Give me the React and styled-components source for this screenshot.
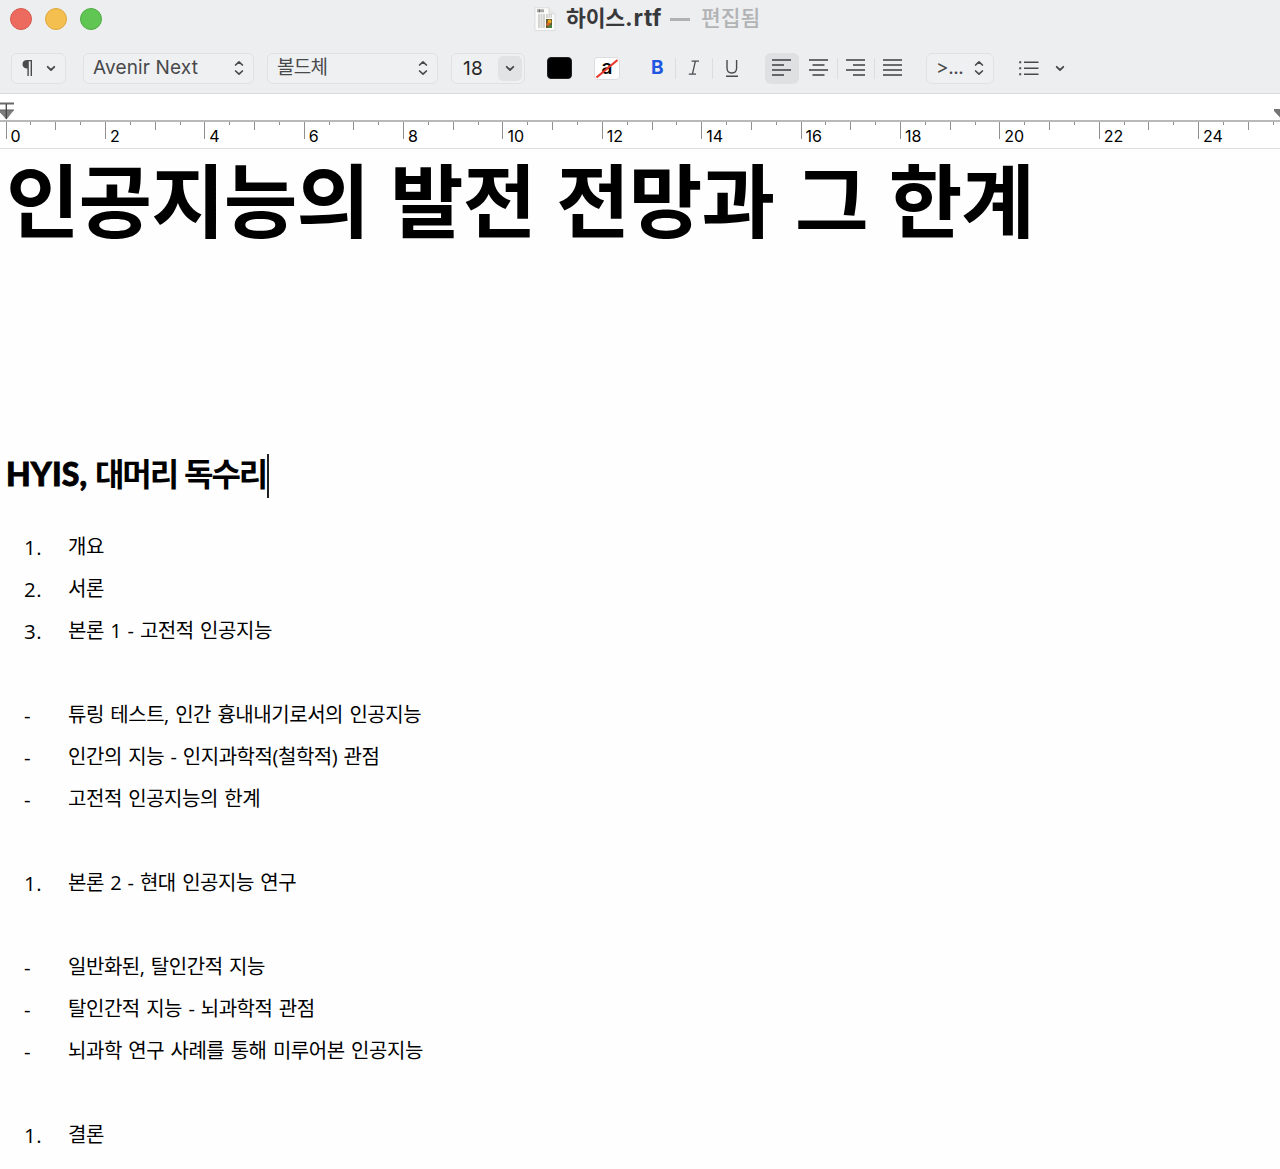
import React from "react";
import styled, { createGlobalStyle } from "styled-components";

const esquema = [
  { marca: "1.", texto: "개요" },
  { marca: "2.", texto: "서론" },
  { marca: "3.", texto: "본론 1 - 고전적 인공지능" },
  {},
  { marca: "-", texto: "튜링 테스트, 인간 흉내내기로서의 인공지능" },
  { marca: "-", texto: "인간의 지능 - 인지과학적(철학적) 관점" },
  { marca: "-", texto: "고전적 인공지능의 한계" },
  {},
  { marca: "1.", texto: "본론 2 - 현대 인공지능 연구" },
  {},
  { marca: "-", texto: "일반화된, 탈인간적 지능" },
  { marca: "-", texto: "탈인간적 지능 - 뇌과학적 관점" },
  { marca: "-", texto: "뇌과학 연구 사례를 통해 미루어본 인공지능" },
  {},
  { marca: "1.", texto: "결론" },
];

// una marca cada media unidad de la regla
const marcas = Array.from({ length: 52 }, (_, i) => i);

const Flechas = () => (
  <svg width="10" height="16" viewBox="0 0 10 16" fill="none" stroke="#48494b" strokeWidth="1.7" strokeLinecap="round" strokeLinejoin="round">
    <path d="M1.6 5 5 1.8 8.4 5M1.6 11 5 14.2 8.4 11" />
  </svg>
);

const Abajo = () => (
  <svg width="10" height="7" viewBox="0 0 10 7" fill="none" stroke="#48494b" strokeWidth="1.8" strokeLinecap="round" strokeLinejoin="round">
    <path d="M1.7 1.8 5 5 8.3 1.8" />
  </svg>
);

const lineas = {
  izquierda: ["0 19", "0 12", "0 19", "0 12"],
  centro: ["0 19", "3.5 15.5", "0 19", "3.5 15.5"],
  derecha: ["0 19", "7 19", "0 19", "7 19"],
  justificado: ["0 19", "0 19", "0 19", "0 19"],
};

const Alineado = ({ tipo }) => (
  <svg width="20" height="18" viewBox="0 0 20 18" stroke="#3d3e40" strokeWidth="1.5">
    {lineas[tipo].map((linea, i) => {
      const [x1, x2] = linea.split(" ");
      return <line key={i} x1={x1} x2={x2} y1={1 + i * 5} y2={1 + i * 5} />;
    })}
  </svg>
);

const Documento = () => (
  <svg width="22" height="25" viewBox="0 0 22 25">
    <path d="M1 .8h14l6 6v16.8H1z" fill="#fbfbfa" stroke="#d2d2d2" strokeWidth=".7" />
    <path d="M15 .8v6h6" fill="#e9e9e9" stroke="#cfcfcf" strokeWidth=".6" />
    <path d="M4 2.3v3M5.4 2.3v3M7 2.3v3M9 2.3v3" stroke="#454545" strokeWidth=".9" />
    <path d="M4 8h7M4 10h7M4 12h7M4 14h7M4 16h7M4 18h7M4 20h7M12 8h6M12 10h6" stroke="#a4a4a0" strokeWidth=".9" strokeDasharray="2 .5" />
    <path d="M12 12h6v9h-6z" fill="#605c2e" />
    <circle cx="15.6" cy="14.5" r="1.9" fill="#f0a51b" />
    <circle cx="14" cy="17.3" r="1.7" fill="#d5632c" />
    <path d="M15 18h3v3h-4z" fill="#4b823b" />
  </svg>
);

const App = () => {
  return (
    <Ventana>
      <EstiloGlobal />
      <BarraTitulo>
        <Semaforos>
          <Luz color="#ed6a5e" borde="#d9574c" />
          <Luz color="#f5bf4f" borde="#dea63a" />
          <Luz color="#61c554" borde="#4dac41" />
        </Semaforos>
        <Documento />
        <Archivo>하이스<Extension>.rtf</Extension></Archivo>
        <Guion />
        <Estado>편집됨</Estado>
      </BarraTitulo>

      <Herramientas>
        <Control ancho="55px" izq="11px">
          <Parrafo width="11" height="17" viewBox="0 0 11 17">
            <path d="M5.4 0H10v16H8.6V1.2H6.8V16H5.4V8.5C2.2 8.5.5 6.8.5 4.2S2.3 0 5.4 0z" fill="#4a4b4d" />
          </Parrafo>
          <Abajo />
        </Control>
        <Control ancho="171px" izq="17px">
          <Valor espacio=".15px">Avenir Next</Valor>
          <Flechas />
        </Control>
        <Control ancho="171px" izq="13px">
          <Valor espacio="-.7px">볼드체</Valor>
          <Flechas />
        </Control>
        <Control ancho="74px" izq="13px" cuerpo>
          <Valor espacio=".3px" cuerpo>18</Valor>
          <BotonCuerpo>
            <Abajo />
          </BotonCuerpo>
        </Control>
        <ColorTexto />
        <ColorFondo>
          a
          <svg width="26" height="23" viewBox="0 0 26 23">
            <path d="M2.5 20.5 23.5 3" stroke="#e8392d" strokeWidth="2.2" />
          </svg>
        </ColorFondo>
        <Estilos>
          <Negrita>B</Negrita>
          <Separador />
          <svg width="12" height="16" viewBox="0 0 12 16" fill="none" stroke="#4a4b4d" strokeWidth="1.3">
            <path d="M3.6 1.2H11M.8 14.2H8M7.4 1.2 4.4 14.2" />
          </svg>
          <Separador />
          <svg width="14" height="19" viewBox="0 0 14 19" fill="none" stroke="#4a4b4d" strokeWidth="1.4">
            <path d="M2 1v8c0 3 1.8 5 4.8 5s4.8-2 4.8-5V1M1 17.3h12" />
          </svg>
        </Estilos>
        <Alineaciones>
          <BotonAlinear activo>
            <Alineado tipo="izquierda" />
          </BotonAlinear>
          <BotonAlinear>
            <Alineado tipo="centro" />
          </BotonAlinear>
          <BotonAlinear linea>
            <Alineado tipo="derecha" />
          </BotonAlinear>
          <BotonAlinear linea>
            <Alineado tipo="justificado" />
          </BotonAlinear>
        </Alineaciones>
        <Control ancho="68px" izq="16px">
          <Valor espacio="-.4px">&gt;...</Valor>
          <Flechas />
        </Control>
        <Listas>
          <svg width="20" height="16" viewBox="0 0 20 16" stroke="#48494b" strokeWidth="1.4">
            <path d="M5 2.2h14.5M5 8.2h14.5M5 14.2h14.5" />
            <path d="M.2 2.2h2M.2 8.2h2M.2 14.2h2" strokeWidth="2" />
          </svg>
          <Abajo />
        </Listas>
      </Herramientas>

      <Regla>
        <Margenes>
          <svg width="14" height="19" viewBox="0 0 14 19">
            <path d="M0 .5h14v2H0z" fill="#686868" />
            <path d="M0 8h14L6.5 17.5 0 10.5z" fill="#7c7c7c" />
            <path d="M0 8h14" stroke="#5f5f5f" />
            <path d="M6.3 2v15" stroke="#444" strokeWidth="1.3" />
          </svg>
          <svg width="6" height="19" viewBox="0 0 6 19">
            <path d="M0 7h6v8.5L0 9z" fill="#747474" />
          </svg>
        </Margenes>
        <Escala>
          {marcas.map((i) => (
            <Marca key={i} alto={i % 4 === 0 ? 17 : i % 2 === 0 ? 8 : 3}>
              {i % 4 === 0 && <Numero>{i / 2}</Numero>}
            </Marca>
          ))}
        </Escala>
      </Regla>

      <Hoja>
        <Titular>인공지능의 발전 전망과 그 한계</Titular>
        <Autores>
          <Siglas>HYIS,</Siglas>
          <span>대머리 독수리</span>
          <Cursor />
        </Autores>
        <Esquema>
          {esquema.map((punto, i) => (
            <Punto key={i}>
              <Vineta>{punto.marca}</Vineta>
              <span>{punto.texto}</span>
            </Punto>
          ))}
        </Esquema>
      </Hoja>
    </Ventana>
  );
};

const EstiloGlobal = createGlobalStyle`
  * {
    box-sizing: border-box;
  }

  body {
    margin: 0;
    background: #fefefe;
  }

  svg {
    display: block;
    flex: none;
  }
`;

const Ventana = styled.div`
  width: 1280px;
  height: 1169px;
  overflow: hidden;
  background: #fefefe;
  color: #000;
  font-family: Inter, "Noto Sans CJK KR", sans-serif;
`;

const BarraTitulo = styled.header`
  display: flex;
  align-items: center;
  height: 38px;
  background: #edeef0;
`;

const Semaforos = styled.div`
  display: flex;
  gap: 13px;
  width: 534px;
  padding-left: 10px;
`;

const Luz = styled.span`
  width: 22px;
  height: 22px;
  border-radius: 50%;
  background: ${(props) => props.color};
  border: 1px solid ${(props) => props.borde};
`;

const Archivo = styled.strong`
  width: 96px;
  margin-left: 10px;
  margin-top: -3px;
  font-size: 21.5px;
  line-height: 36px;
  letter-spacing: -0.1px;
  white-space: nowrap;
  color: #38393b;
`;

const Extension = styled.span`
  font-size: 23px;
  letter-spacing: 0.7px;
`;

const Guion = styled.span`
  width: 20px;
  height: 3px;
  margin: 1px 11px 0 8px;
  background: #b0b1b3;
`;

const Estado = styled.span`
  margin-top: -3px;
  font-size: 21.5px;
  font-weight: 500;
  line-height: 36px;
  color: #b2b3b5;
`;

const Herramientas = styled.div`
  display: flex;
  align-items: center;
  height: 56px;
  padding-top: 5px;
  background: #edeef0;
  border-bottom: 1px solid #d9dadb;
`;

const Control = styled.div`
  display: flex;
  flex: none;
  align-items: center;
  justify-content: space-between;
  width: ${(props) => props.ancho};
  height: 31px;
  margin-left: ${(props) => props.izq};
  padding: ${(props) => (props.cuerpo ? "0 2px 0 11px" : "0 9px")};
  border: 1px solid #e0e1e3;
  border-radius: 6px;
  background: #eff0f2;
`;

const Parrafo = styled.svg`
  margin-left: 1px;
`;

const Valor = styled.span`
  font-size: 19px;
  line-height: 27px;
  margin-top: ${(props) => (props.cuerpo ? "1px" : "-2px")};
  letter-spacing: ${(props) => props.espacio};
  white-space: nowrap;
  color: ${(props) => (props.cuerpo ? "#262728" : "#48494b")};
`;

const BotonCuerpo = styled.span`
  display: flex;
  align-items: center;
  justify-content: center;
  width: 24px;
  height: 25px;
  border-radius: 5px;
  background: #e2e3e5;
`;

const ColorTexto = styled.span`
  flex: none;
  width: 25px;
  height: 22px;
  margin-left: 22px;
  border: 1px solid #222;
  border-radius: 4px;
  background: #000;
`;

const ColorFondo = styled.span`
  position: relative;
  flex: none;
  width: 26px;
  height: 23px;
  margin-left: 22px;
  border-radius: 4px;
  background: #fff;
  box-shadow: inset 0 0 0 1px #dcddde;
  font-size: 19px;
  font-weight: 600;
  line-height: 22px;
  text-align: center;

  svg {
    position: absolute;
    inset: 0;
  }
`;

const Estilos = styled.div`
  display: flex;
  align-items: center;
  justify-content: space-between;
  width: 88px;
  margin-left: 31px;
`;

const Negrita = styled.span`
  font-size: 19px;
  font-weight: 700;
  line-height: 24px;
  color: #1f57e0;
`;

const Separador = styled.span`
  width: 1px;
  height: 21px;
  background: #dcdddf;
`;

const Alineaciones = styled.div`
  display: flex;
  gap: 3px;
  margin-left: 26px;
`;

const BotonAlinear = styled.span`
  position: relative;
  display: flex;
  align-items: center;
  justify-content: center;
  width: 34px;
  height: 31px;
  border-radius: 6px;
  background: ${(props) => (props.activo ? "#dfe0e2" : "transparent")};

  &::before {
    content: "";
    position: absolute;
    left: -2px;
    top: 5px;
    width: 1px;
    height: 21px;
    background: ${(props) => (props.linea ? "#dcdddf" : "transparent")};
  }
`;

const Listas = styled.div`
  display: flex;
  align-items: center;
  gap: 16px;
  margin-left: 25px;
`;

const Regla = styled.div`
  height: 55px;
  background: #fff;
  border-bottom: 1px solid #dedede;
`;

const Margenes = styled.div`
  display: flex;
  justify-content: space-between;
  height: 26px;
  padding-top: 8px;
`;

const Escala = styled.div`
  display: grid;
  grid-template-columns: repeat(52, 24.85px);
  padding-left: 5.6px;
  border-top: 2px solid #b9b9b9;
`;

const Marca = styled.div`
  position: relative;
  height: 26px;

  &::before {
    content: "";
    display: block;
    width: 1px;
    height: ${(props) => props.alto}px;
    background: #8f8f8f;
  }
`;

const Numero = styled.span`
  position: absolute;
  left: 5px;
  top: 4px;
  font-size: 16px;
  line-height: 20px;
`;

const Hoja = styled.main`
  padding-left: 6px;
  font-family: "Open Sans", "Noto Sans CJK KR", sans-serif;
`;

const Titular = styled.h1`
  height: 290px;
  margin: 0;
  font-family: "Liberation Sans", "Noto Sans CJK KR", sans-serif;
  font-size: 80px;
  font-weight: 700;
  line-height: 110px;
  letter-spacing: -1px;
  word-spacing: -0.2px;
  white-space: nowrap;
`;

const Autores = styled.h2`
  display: flex;
  align-items: center;
  height: 74px;
  margin: 0;
  font-family: Lato, "Noto Sans CJK KR", sans-serif;
  font-size: 32px;
  font-weight: 700;
  line-height: 70px;
  letter-spacing: -2.1px;
  word-spacing: 1.4px;
  white-space: nowrap;

  span:not(:last-child) {
    height: 74px;
  }
`;

const Siglas = styled.span`
  width: 89px;
  font-weight: 900;
  letter-spacing: 0.1px;
  -webkit-text-stroke: 0.8px #000;
`;

const Cursor = styled.span`
  width: 2px;
  height: 44px;
  margin-left: 1px;
  background: #222;
`;

const Esquema = styled.div`
  padding-top: 13px;
`;

const Punto = styled.div`
  display: flex;
  height: 42px;
  font-size: 20px;
  line-height: 42px;
  letter-spacing: -0.45px;
  word-spacing: 1.6px;
  white-space: nowrap;
`;

const Vineta = styled.span`
  width: 62px;
  padding-left: 18px;
  font-size: 20.5px;
  letter-spacing: 0.5px;
`;

export default App;
